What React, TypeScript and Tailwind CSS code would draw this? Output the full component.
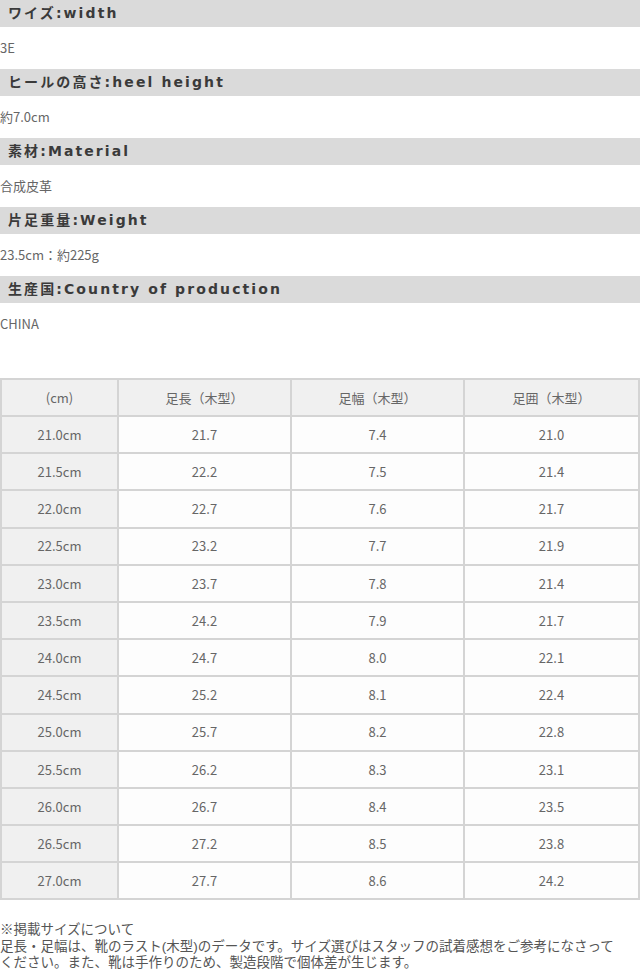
const specs = [
  { label: 'ワイズ:width', value: '3E' },
  { label: 'ヒールの高さ:heel height', value: '約7.0cm' },
  { label: '素材:Material', value: '合成皮革' },
  { label: '片足重量:Weight', value: '23.5cm：約225g' },
  { label: '生産国:Country of production', value: 'CHINA' },
];

const rows = [
  ['21.0cm', '21.7', '7.4', '21.0'],
  ['21.5cm', '22.2', '7.5', '21.4'],
  ['22.0cm', '22.7', '7.6', '21.7'],
  ['22.5cm', '23.2', '7.7', '21.9'],
  ['23.0cm', '23.7', '7.8', '21.4'],
  ['23.5cm', '24.2', '7.9', '21.7'],
  ['24.0cm', '24.7', '8.0', '22.1'],
  ['24.5cm', '25.2', '8.1', '22.4'],
  ['25.0cm', '25.7', '8.2', '22.8'],
  ['25.5cm', '26.2', '8.3', '23.1'],
  ['26.0cm', '26.7', '8.4', '23.5'],
  ['26.5cm', '27.2', '8.5', '23.8'],
  ['27.0cm', '27.7', '8.6', '24.2'],
];

const heads = ['(cm)', '足長（木型）', '足幅（木型）', '足囲（木型）'];
const widths = ['w-[117px]', 'w-[173px]', 'w-[173px]', 'w-[175px]'];

export default function App() {
  return (
    <div className="w-[640px] bg-white font-['Noto_Sans_CJK_JP',sans-serif] text-[13px] text-[#666]">
      {specs.map((s) => (
        <div key={s.label}>
          <div className="flex h-[27px] items-center bg-[#dadada] pl-2 font-['DejaVu_Sans','Noto_Sans_CJK_JP',sans-serif] text-[14px] font-bold tracking-[2.1px] text-[#3a3a3a]">
            {s.label}
          </div>
          <div className="flex h-[42px] items-center">{s.value}</div>
        </div>
      ))}

      <table className="mt-[33px] w-[639px] table-fixed border-collapse border-2 border-[#d4d4d4] text-center">
        <thead>
          <tr className="h-[37px] bg-[#f0f0f0]">
            {heads.map((h, i) => (
              <th key={h} className={`${widths[i]} border-2 border-[#d4d4d4] font-normal`}>
                {h}
              </th>
            ))}
          </tr>
        </thead>
        <tbody>
          {rows.map((r) => (
            <tr key={r[0]} className="h-[37.2px]">
              {r.map((c, i) => (
                <td
                  key={i}
                  className={`border-2 border-[#d4d4d4] ${i === 0 ? 'bg-[#f0f0f0]' : 'bg-[#fdfdfd]'}`}
                >
                  {c}
                </td>
              ))}
            </tr>
          ))}
        </tbody>
      </table>

      <div className="mt-[22px] font-['Liberation_Sans','Noto_Sans_CJK_JP',sans-serif] text-[13.5px] leading-[16.5px] text-[#555]">
        <div>※掲載サイズについて</div>
        <div>足長・足幅は、靴のラスト(木型)のデータです。サイズ選びはスタッフの試着感想をご参考になさって</div>
        <div>ください。また、靴は手作りのため、製造段階で個体差が生じます。</div>
      </div>
    </div>
  );
}
